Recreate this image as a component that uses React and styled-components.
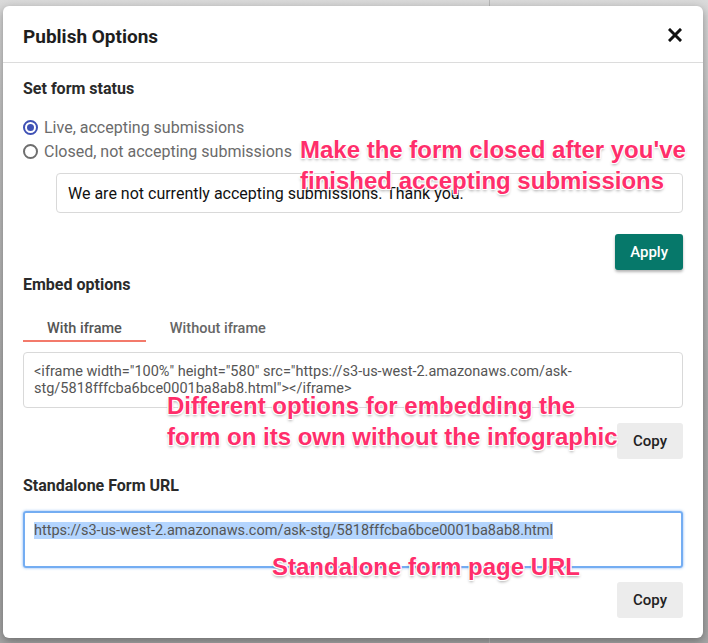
import React from 'react';
import styled, { createGlobalStyle } from 'styled-components';

const GlobalStyle = createGlobalStyle`
  html, body {
    margin: 0;
    padding: 0;
  }
  body {
    font-family: Roboto, "Noto Sans", Arial, sans-serif;
    color: #222;
  }
  * {
    box-sizing: border-box;
  }
`;

const Backdrop = styled.div`
  position: relative;
  width: 708px;
  height: 643px;
  overflow: hidden;
  padding: 6px 5px 0 3px;
  background:
    linear-gradient(90deg, transparent 489px, #b8b8b8 489px, #b8b8b8 490px, transparent 490px),
    linear-gradient(180deg, #dadada 0px, #c4c4c4 120px, #acacac 400px, #a6a6a6 643px);
`;

const Modal = styled.div`
  width: 700px;
  height: 632px;
  background: #fff;
  border-radius: 6px;
  box-shadow: 0 3px 10px rgba(0, 0, 0, 0.35);
  display: flex;
  flex-direction: column;
`;

const Header = styled.div`
  height: 57px;
  padding: 0 20px;
  display: flex;
  align-items: center;
  justify-content: space-between;
  border-bottom: 1px solid #dcdcdc;
`;

const Title = styled.h2`
  margin: 0;
  padding-top: 4px;
  font-size: 19px;
  font-weight: 700;
  color: #1e1e1e;
`;

const CloseButton = styled.button`
  border: none;
  background: none;
  padding: 0;
  width: 16px;
  height: 16px;
  margin-top: 2px;
  display: flex;
  align-items: center;
  justify-content: center;
  cursor: pointer;
`;

const Body = styled.div`
  padding: 0 20px;
  display: flex;
  flex-direction: column;
`;

const SectionTitle = styled.h3`
  margin: ${(p) => p.$top}px 0 0;
  font-size: 16px;
  font-weight: 700;
  line-height: 20px;
  color: #2a2a2a;
`;

const RadioGroup = styled.div`
  margin-top: 18px;
  display: flex;
  flex-direction: column;
  gap: 4px;
`;

const RadioRow = styled.label`
  display: flex;
  align-items: center;
  gap: 6px;
  height: 20px;
  font-size: 16px;
  color: #6b6b6b;
`;

const RadioCircle = styled.span`
  width: 15px;
  height: 15px;
  border-radius: 50%;
  border: 2px solid ${(p) => (p.$checked ? '#3f51b5' : '#6e6e6e')};
  display: flex;
  align-items: center;
  justify-content: center;
  &::after {
    content: '';
    width: 7px;
    height: 7px;
    border-radius: 50%;
    background: ${(p) => (p.$checked ? '#3f51b5' : 'transparent')};
  }
`;

const MessageInput = styled.div`
  margin: 12px 0 0 33px;
  height: 40px;
  border: 1px solid #d9d9d9;
  border-radius: 4px;
  padding: 0 11px;
  display: flex;
  align-items: center;
  font-size: 16px;
  color: #111;
`;

const ButtonRow = styled.div`
  display: flex;
  justify-content: flex-end;
  margin-top: ${(p) => p.$top}px;
`;

const Button = styled.button`
  height: 36px;
  padding: 0 ${(p) => (p.$primary ? 15 : 16)}px;
  border: none;
  border-radius: 3px;
  font-family: Roboto, "Noto Sans", Arial, sans-serif;
  font-size: 15px;
  font-weight: 500;
  color: ${(p) => (p.$primary ? '#fff' : '#222')};
  background: ${(p) => (p.$primary ? '#06786a' : '#ececec')};
  box-shadow: ${(p) => (p.$primary ? '0 2px 3px rgba(0,0,0,0.3)' : 'none')};
`;

const Tabs = styled.div`
  margin-top: 16px;
  display: flex;
  height: 31px;
`;

const Tab = styled.div`
  padding: 5px 24px 0;
  display: flex;
  align-items: center;
  justify-content: center;
  font-size: 14.5px;
  font-weight: 500;
  color: ${(p) => (p.$active ? '#555' : '#666')};
  border-bottom: 2px solid ${(p) => (p.$active ? '#f37a6b' : 'transparent')};
`;

const CodeBox = styled.div`
  margin-top: 10px;
  height: 56px;
  border: 1px solid #d9d9d9;
  border-radius: 4px;
  padding: 10px 10px;
  font-size: 14.5px;
  line-height: 17px;
  color: #555;
`;

const UrlBox = styled.div`
  margin-top: 15px;
  height: 57px;
  border: 2px solid #74adf2;
  border-radius: 3px;
  box-shadow: 0 0 3px rgba(100, 160, 240, 0.8);
  padding: 8px 9px;
  font-size: 14.5px;
  line-height: 20px;
  color: #555;
`;

const Selected = styled.span`
  background: #b4d5fe;
`;

const Note = styled.div`
  position: absolute;
  left: ${(p) => p.$x}px;
  top: ${(p) => p.$y}px;
  font-family: "Liberation Sans", Arial, sans-serif;
  font-weight: 700;
  font-size: 24px;
  line-height: 31px;
  color: #ff2e6b;
  white-space: nowrap;
  text-shadow:
    -1px -1px 0 #fff, 1px -1px 0 #fff, -1px 1px 0 #fff, 1px 1px 0 #fff,
    0 2px 3px rgba(0, 0, 0, 0.35);
`;

export default function App() {
  return (
    <>
      <GlobalStyle />
      <Backdrop>
        <Modal>
          <Header>
            <Title>Publish Options</Title>
            <CloseButton aria-label="Close">
              <svg width="14" height="14" viewBox="0 0 14 14">
                <path d="M2 2 L12 12 M12 2 L2 12" stroke="#111" strokeWidth="3" strokeLinecap="square" />
              </svg>
            </CloseButton>
          </Header>
          <Body>
            <SectionTitle $top={16}>Set form status</SectionTitle>
            <RadioGroup>
              <RadioRow>
                <RadioCircle $checked />
                Live, accepting submissions
              </RadioRow>
              <RadioRow>
                <RadioCircle />
                Closed, not accepting submissions
              </RadioRow>
            </RadioGroup>
            <MessageInput>We are not currently accepting submissions. Thank you.</MessageInput>
            <ButtonRow $top={21}>
              <Button $primary>Apply</Button>
            </ButtonRow>
            <SectionTitle $top={5}>Embed options</SectionTitle>
            <Tabs>
              <Tab $active>With iframe</Tab>
              <Tab>Without iframe</Tab>
            </Tabs>
            <CodeBox>
              {'<iframe width="100%" height="580" src="https://s3-us-west-2.amazonaws.com/ask-stg/5818fffcba6bce0001ba8ab8.html"></iframe>'}
            </CodeBox>
            <ButtonRow $top={15}>
              <Button>Copy</Button>
            </ButtonRow>
            <SectionTitle $top={17}>Standalone Form URL</SectionTitle>
            <UrlBox>
              <Selected>https://s3-us-west-2.amazonaws.com/ask-stg/5818fffcba6bce0001ba8ab8.html</Selected>
            </UrlBox>
            <ButtonRow $top={14}>
              <Button>Copy</Button>
            </ButtonRow>
          </Body>
        </Modal>
        <Note $x={300} $y={134}>
          Make the form closed after you've
          <br />
          finished accepting submissions
        </Note>
        <Note $x={167} $y={390}>
          Different options for embedding the
          <br />
          form on its own without the infographic
        </Note>
        <Note $x={272} $y={551}>Standalone form page URL</Note>
      </Backdrop>
    </>
  );
}
